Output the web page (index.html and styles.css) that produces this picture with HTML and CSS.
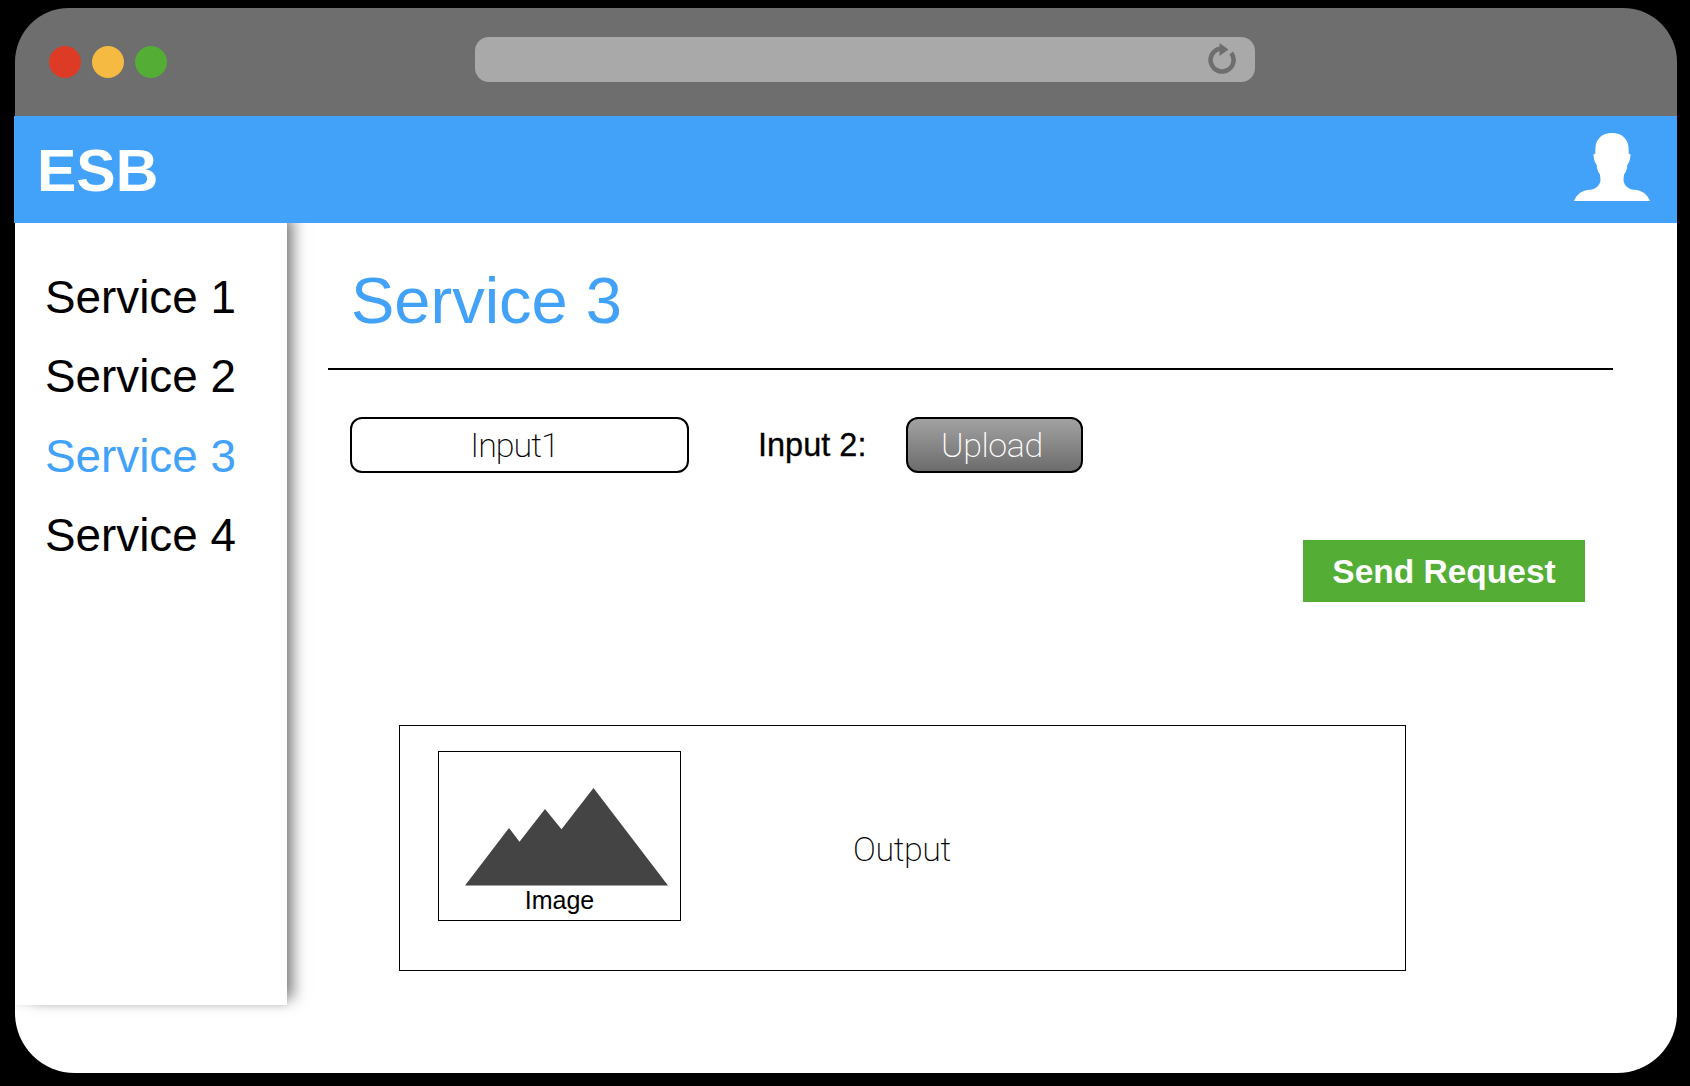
FILE: index.html
```html
<!DOCTYPE html>
<html lang="en">
  <head>
    <meta charset="UTF-8" />
    <title>ESB</title>
    <link rel="stylesheet" href="styles.css">
  </head>

  <body>
    <div class="window">
      <div class="chrome">
        <div class="dots">
          <span class="dot red"></span>
          <span class="dot yellow"></span>
          <span class="dot green"></span>
        </div>
        <div class="address">
          <svg class="reload" width="32" height="36" viewBox="0 0 32 36">
            <path d="M12 6.7A11.5 11.5 0 1 0 23.2 11" fill="none" stroke="#6e6e6e" stroke-width="4.6" />
            <path d="M11.5 1L20.5 7.5L11.5 14Z" fill="#6e6e6e" />
          </svg>
        </div>
      </div>

      <header class="topbar">
        <span class="logo">ESB</span>
        <svg class="user" width="76" height="68" viewBox="0 0 76 67" preserveAspectRatio="none">
          <path fill="#fff" d="M38 0C48 0 54 6 54.5 14L54.8 20.5L56.5 21C56.5 25 55.5 29 53.5 31C53 36 51.5 39 50 41L49.5 46C50 52 54 55 60 56C68 56.5 73 60 76 67L0 67C3 60 8 56.5 16 56C22 55 26 52 26.5 46L26 41C24.5 39 23 36 22.5 31C20.5 29 19.5 25 19.5 21L21.2 20.5L21.5 14C22 6 28 0 38 0Z" />
        </svg>
      </header>

      <div class="body">
        <nav class="sidebar">
          <a class="nav-item">Service 1</a>
          <a class="nav-item">Service 2</a>
          <a class="nav-item active">Service 3</a>
          <a class="nav-item">Service 4</a>
        </nav>

        <main class="content">
          <h1 class="title">Service 3</h1>
          <hr class="rule" />

          <section class="inputs">
            <div class="input-box">Input1</div>
            <label class="input-label">Input 2:</label>
            <button class="upload">Upload</button>
          </section>

          <section class="actions">
            <button class="send">Send Request</button>
          </section>

          <section class="output">
            <figure class="image-box">
              <svg class="mountain" width="241" height="134" viewBox="0 0 241 134">
                <path fill="#444" d="M26 133.5L70 76L80.5 89.7L106 57L122.5 77.3L154.5 36L229 133.5Z" />
              </svg>
              <figcaption class="image-label">Image</figcaption>
            </figure>
            <span class="output-label">Output</span>
          </section>
        </main>
      </div>
    </div>
  </body>
</html>
```

FILE: styles.css
```css
html,
body {
  margin: 0;
  padding: 0;
  height: 100%;
}

body {
  background: #000;
  font-family: "Liberation Sans", Arial, sans-serif;
  color: #000;
}

.window {
  width: 1663px;
  padding-top: 8px;
  margin-left: 14px;
}

.chrome {
  height: 108px;
  margin-left: 1px;
  background: #6e6e6e;
  border-radius: 54px 54px 0 0;
  display: flex;
  align-items: flex-start;
}

.dots {
  display: flex;
  gap: 11px;
  margin: 38px 0 0 34px;
}

.dot {
  width: 32px;
  height: 32px;
  border-radius: 50%;
}

.red {
  background: #de3b26;
}

.yellow {
  background: #f4ba41;
}

.green {
  background: #54ad34;
}

.address {
  width: 780px;
  height: 45px;
  margin: 29px 0 0 308px;
  padding-right: 15px;
  box-sizing: border-box;
  background: #a9a9a9;
  border-radius: 14px;
  display: flex;
  align-items: center;
  justify-content: flex-end;
}

.topbar {
  position: relative;
  z-index: 1;
  height: 107px;
  padding: 2px 27px 0 23px;
  box-sizing: border-box;
  background: #42a1f9;
  color: #fff;
  display: flex;
  align-items: center;
  justify-content: space-between;
}

.logo {
  font-size: 59px;
  font-weight: bold;
}

.user {
  margin-bottom: 7px;
}

.body {
  height: 850px;
  margin-left: 1px;
  background: #fff;
  border-radius: 0 0 60px 60px;
  display: flex;
  align-items: flex-start;
}

.sidebar {
  width: 272px;
  height: 794px;
  margin-top: -12px;
  flex-shrink: 0;
  padding-top: 47px;
  box-sizing: border-box;
  background: #fff;
  box-shadow: 12px 0 14px -6px rgba(0, 0, 0, 0.5), 0 2px 6px rgba(0, 0, 0, 0.07);
  display: flex;
  flex-direction: column;
}

.nav-item {
  height: 79.4px;
  line-height: 80px;
  padding-left: 30px;
  font-size: 45.8px;
}

.active {
  color: #42a1f9;
}

.content {
  flex-grow: 1;
}

.title {
  margin: 0;
  padding: 43px 0 0 64px;
  height: 108px;
  box-sizing: border-box;
  font-size: 65px;
  font-weight: normal;
  line-height: 70px;
  color: #42a1f9;
}

.rule {
  width: 1285px;
  height: 2px;
  margin: 37px 0 0 41px;
  border: none;
  background: #000;
}

.inputs {
  display: flex;
  align-items: center;
  margin: 47px 0 0 63px;
}

.input-box {
  width: 339px;
  height: 56px;
  padding-right: 10px;
  box-sizing: border-box;
  border: 2px solid #000;
  border-radius: 12px;
  font-family: Roboto, sans-serif;
  font-weight: 200;
  font-size: 34px;
  letter-spacing: -1px;
  line-height: 52px;
  text-align: center;
}

.input-label {
  margin-left: 69px;
  font-size: 32.5px;
  -webkit-text-stroke: 0.3px #000;
}

.upload {
  width: 177px;
  height: 56px;
  margin-left: 40px;
  padding: 0 6px 0 0;
  border: 2px solid #000;
  border-radius: 12px;
  background: linear-gradient(#a2a2a2, #6c6c6c);
  color: #fff;
  font-family: Roboto, sans-serif;
  font-weight: 200;
  font-size: 34px;
  letter-spacing: -0.4px;
}

.actions {
  display: flex;
  justify-content: flex-end;
  margin: 67px 92px 0 0;
}

.send {
  width: 282px;
  height: 62px;
  padding: 2px 0 0;
  border: none;
  background: #54ad34;
  color: #fff;
  font-family: inherit;
  font-weight: bold;
  font-size: 33.5px;
}

.output {
  width: 1007px;
  height: 246px;
  margin: 123px 0 0 112px;
  padding-left: 38px;
  box-sizing: border-box;
  border: 1px solid #000;
  display: flex;
  align-items: center;
}

.image-box {
  width: 243px;
  height: 170px;
  margin: 0;
  align-self: flex-start;
  margin-top: 25px;
  box-sizing: border-box;
  border: 1px solid #000;
  display: flex;
  flex-direction: column;
  align-items: center;
}

.mountain {
  flex-shrink: 0;
}

.image-label {
  font-size: 25px;
  line-height: 28px;
}

.output-label {
  margin-left: 172px;
  padding-top: 2px;
  font-family: Roboto, sans-serif;
  font-weight: 200;
  font-size: 34px;
  letter-spacing: -0.4px;
}
```
